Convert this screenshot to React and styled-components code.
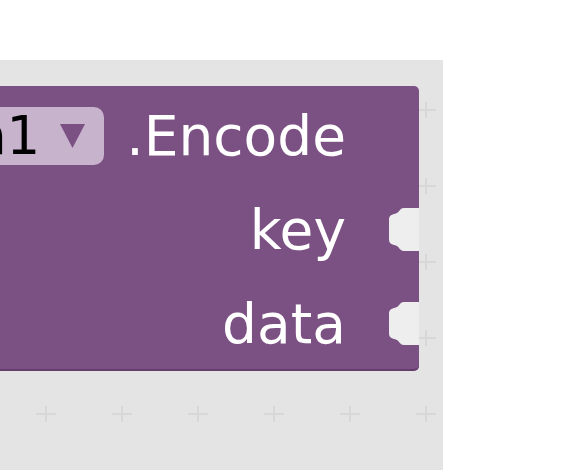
import React from "react";
import styled, { createGlobalStyle } from "styled-components";

const GlobalStyle = createGlobalStyle`
  html, body {
    margin: 0;
    padding: 0;
    background: #ffffff;
  }
`;

const Workspace = styled.div`
  position: relative;
  margin-top: 60px;
  width: 443px;
  height: 410px;
  background: #e4e4e4;
  overflow: hidden;
`;

const GridLayer = styled.svg`
  position: absolute;
  inset: 0;
  width: 100%;
  height: 100%;
`;

const Block = styled.div`
  position: relative;
  margin-top: 26px;
  width: 419px;
  height: 285px;
  box-sizing: border-box;
  padding: 21px 0 18px 0;
  display: flex;
  flex-direction: column;
  gap: 36px;
  background: #7b5083;
  border-radius: 0 5px 5px 0;
  box-shadow: inset 0 -2px 0 rgba(60, 30, 70, 0.35);
  font-family: "DejaVu Sans", "Liberation Sans", sans-serif;
  font-size: 55px;
  color: #ffffff;
`;

const Row = styled.div`
  position: relative;
  display: flex;
  justify-content: flex-end;
  align-items: center;
  gap: ${({ $gap }) => $gap || 0}px;
  height: 58px;
  padding-right: 73px;
  white-space: nowrap;
`;

const Label = styled.span`
  line-height: 58px;
`;

const Dropdown = styled.span`
  display: flex;
  align-items: center;
  gap: 20px;
  flex-shrink: 0;
  height: 58px;
  padding: 0 19px 0 16px;
  border-radius: 10px;
  background: #c8b3cc;
  color: #000000;
  font-size: 53px;
  line-height: 58px;
`;

const Notch = styled.svg`
  position: absolute;
  right: 0;
  top: 7px;
  width: 30px;
  height: 43px;
`;

function Arrow() {
  return (
    <svg width="25" height="24" viewBox="0 0 25 24">
      <polygon points="0,0 25,0 12.5,24" fill="#7b5083" />
    </svg>
  );
}

function Socket() {
  return (
    <Notch viewBox="0 0 30 43">
      <path
        d="M30 0 H15 C10 0 11 5 5 6 C1 7 0 9 0 12 V31 C0 34 1 36 5 37 C11 38 10 43 15 43 H30 Z"
        fill="#eeeeee"
      />
    </Notch>
  );
}

export default function App() {
  return (
    <>
      <GlobalStyle />
      <Workspace>
        <GridLayer>
          <defs>
            <pattern
              id="grid"
              x="8"
              y="12"
              width="76"
              height="76"
              patternUnits="userSpaceOnUse"
            >
              <path d="M28 38 H48 M38 30 V46" stroke="#d8d8d8" strokeWidth="2" />
            </pattern>
          </defs>
          <rect width="100%" height="100%" fill="url(#grid)" />
        </GridLayer>
        <Block>
          <Row $gap={22}>
            <Dropdown>
              <span>Encryption1</span>
              <Arrow />
            </Dropdown>
            <Label>.Encode</Label>
          </Row>
          <Row>
            <Label>key</Label>
            <Socket />
          </Row>
          <Row>
            <Label>data</Label>
            <Socket />
          </Row>
        </Block>
      </Workspace>
    </>
  );
}
